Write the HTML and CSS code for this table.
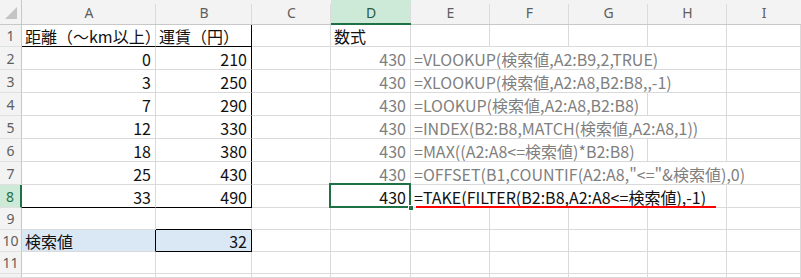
FILE: index.html
```html
<!DOCTYPE html>
<html lang="ja">
<head>
    <meta charset="UTF-8">
    <title>運賃表</title>
    <link rel="stylesheet" href="styles.css">
</head>
<body>
    <div class="sheet">
        <!-- column headers -->
        <div class="corner">
            <svg width="14" height="14" viewBox="0 0 14 14"><polygon points="13,1 13,13 1,13" fill="#c4c4c4"/></svg>
        </div>
        <div class="col-head">A</div>
        <div class="col-head">B</div>
        <div class="col-head">C</div>
        <div class="col-head active">D</div>
        <div class="col-head">E</div>
        <div class="col-head">F</div>
        <div class="col-head">G</div>
        <div class="col-head">H</div>
        <div class="col-head last">I</div>

        <!-- row 1 -->
        <div class="row-head">1</div>
        <div class="c b-bottom">距離（～km以上）</div>
        <div class="c b-bottom b-right">運賃（円）</div>
        <div class="c"></div>
        <div class="c">数式</div>
        <div class="c"></div>
        <div class="c"></div>
        <div class="c"></div>
        <div class="c"></div>
        <div class="c"></div>

        <!-- row 2 -->
        <div class="row-head">2</div>
        <div class="c num">0</div>
        <div class="c num b-right">210</div>
        <div class="c"></div>
        <div class="c num muted">430</div>
        <div class="c muted span-4">=VLOOKUP(検索値,A2:B9,2,TRUE)</div>
        <div class="c"></div>

        <!-- row 3 -->
        <div class="row-head">3</div>
        <div class="c num">3</div>
        <div class="c num b-right">250</div>
        <div class="c"></div>
        <div class="c num muted">430</div>
        <div class="c muted span-4">=XLOOKUP(検索値,A2:A8,B2:B8,,-1)</div>
        <div class="c"></div>

        <!-- row 4 -->
        <div class="row-head">4</div>
        <div class="c num">7</div>
        <div class="c num b-right">290</div>
        <div class="c"></div>
        <div class="c num muted">430</div>
        <div class="c muted span-3">=LOOKUP(検索値,A2:A8,B2:B8)</div>
        <div class="c"></div>
        <div class="c"></div>

        <!-- row 5 -->
        <div class="row-head">5</div>
        <div class="c num">12</div>
        <div class="c num b-right">330</div>
        <div class="c"></div>
        <div class="c num muted">430</div>
        <div class="c muted span-4">=INDEX(B2:B8,MATCH(検索値,A2:A8,1))</div>
        <div class="c"></div>

        <!-- row 6 -->
        <div class="row-head">6</div>
        <div class="c num">18</div>
        <div class="c num b-right">380</div>
        <div class="c"></div>
        <div class="c num muted">430</div>
        <div class="c muted span-3">=MAX((A2:A8&lt;=検索値)*B2:B8)</div>
        <div class="c"></div>
        <div class="c"></div>

        <!-- row 7 -->
        <div class="row-head">7</div>
        <div class="c num">25</div>
        <div class="c num b-right">430</div>
        <div class="c"></div>
        <div class="c num muted">430</div>
        <div class="c muted span-5">=OFFSET(B1,COUNTIF(A2:A8,"&lt;="&amp;検索値),0)</div>

        <!-- row 8 -->
        <div class="row-head active">8</div>
        <div class="c num b-bottom">33</div>
        <div class="c num b-bottom b-right">490</div>
        <div class="c"></div>
        <div class="c num selected">430<span class="handle"></span></div>
        <div class="c span-4 marked">=TAKE(FILTER(B2:B8,A2:A8&lt;=検索値),-1)</div>
        <div class="c"></div>

        <!-- row 9 -->
        <div class="row-head">9</div>
        <div class="c"></div>
        <div class="c b-bottom"></div>
        <div class="c"></div>
        <div class="c"></div>
        <div class="c"></div>
        <div class="c"></div>
        <div class="c"></div>
        <div class="c"></div>
        <div class="c"></div>

        <!-- row 10 -->
        <div class="row-head">10</div>
        <div class="c fill b-right">検索値</div>
        <div class="c num fill b-right b-bottom">32</div>
        <div class="c"></div>
        <div class="c"></div>
        <div class="c"></div>
        <div class="c"></div>
        <div class="c"></div>
        <div class="c"></div>
        <div class="c"></div>

        <!-- row 11 -->
        <div class="row-head">11</div>
        <div class="c"></div>
        <div class="c"></div>
        <div class="c"></div>
        <div class="c"></div>
        <div class="c"></div>
        <div class="c"></div>
        <div class="c"></div>
        <div class="c"></div>
        <div class="c"></div>

        <!-- row 12, only its top edge is in view -->
        <div class="row-head"></div>
        <div class="c"></div>
        <div class="c"></div>
        <div class="c"></div>
        <div class="c"></div>
        <div class="c"></div>
        <div class="c"></div>
        <div class="c"></div>
        <div class="c"></div>
        <div class="c"></div>
    </div>
</body>
</html>
```

FILE: styles.css
```css
* {
    margin: 0;
    padding: 0;
    box-sizing: border-box;
}

body {
    background: #fff;
    width: 801px;
    height: 278px;
    overflow: hidden;
}

.sheet {
    display: grid;
    grid-template-columns: 22px 134px 96px 79px 80px 79px 79px 79px 79px 1fr;
    grid-template-rows: 25px 22px 23px 23px 23px 23px 23px 23px 23px 22px 22px 22px 1fr;
    width: 801px;
    height: 278px;
}

/* headers */
.corner,
.col-head,
.row-head {
    background: #f3f3f3;
    color: #5e5e5e;
    font-family: "Noto Sans", "Liberation Sans", sans-serif;
    font-size: 14px;
    display: flex;
    align-items: center;
    justify-content: center;
}

.corner {
    border-right: 1px solid #c8c8c8;
    border-bottom: 1px solid #c8c8c8;
    align-items: flex-end;
    justify-content: flex-end;
    padding: 0 3px 4px 0;
}

.col-head {
    border-bottom: 1px solid #c8c8c8;
    position: relative;
    padding-top: 1px;
}

.col-head::after {
    content: "";
    position: absolute;
    right: 0;
    top: 4px;
    bottom: 0;
    width: 1px;
    background: #dcdcdc;
}

.col-head.last::after {
    display: none;
}

.col-head.active {
    background: #cde9d8;
    color: #2d5a3f;
    border-bottom: 2px solid #1e7145;
}

.row-head {
    border-right: 1px solid #c8c8c8;
    border-bottom: 1px solid #e0e0e0;
}

.row-head.active {
    background: #cde9d8;
    color: #1e7145;
    border-right: 2px solid #1e7145;
}

/* cells */
.c {
    border-right: 1px solid #dadada;
    border-bottom: 1px solid #dadada;
    font-family: "Noto Sans CJK JP", sans-serif;
    font-size: 16px;
    color: #111;
    display: flex;
    align-items: center;
    padding: 1px 3px 0 3px;
    white-space: nowrap;
    position: relative;
}

.num {
    justify-content: flex-end;
    padding-right: 4px;
}

.muted {
    color: #7f7f7f;
}

.span-3 { grid-column: span 3; }
.span-4 { grid-column: span 4; }
.span-5 { grid-column: span 5; }

.b-bottom {
    border-bottom-color: #000;
}

.b-right {
    border-right-color: #000;
}

.fill {
    background: #dae8f6;
}

/* active cell outline with fill handle */
.selected::before {
    content: "";
    position: absolute;
    left: -2px;
    top: -2px;
    right: -1px;
    bottom: -1px;
    border: 2px solid #1e7145;
}

.handle {
    position: absolute;
    right: -4px;
    bottom: -4px;
    width: 6px;
    height: 6px;
    background: #1e7145;
    border: 1px solid #fff;
    z-index: 2;
}

/* red mark under the TAKE formula */
.marked::after {
    content: "";
    position: absolute;
    left: 5px;
    width: 300px;
    bottom: -1px;
    height: 2px;
    background: #f00;
}
```
